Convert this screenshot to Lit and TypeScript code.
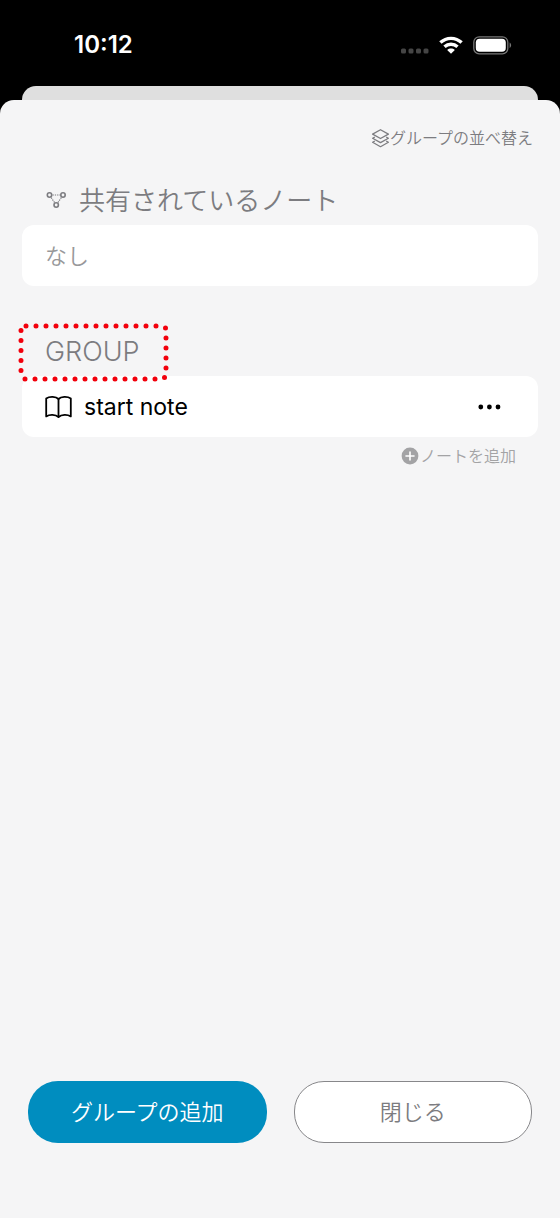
import { LitElement, html, css } from "lit";
import { customElement } from "lit/decorators.js";

@customElement("status-bar")
class StatusBar extends LitElement {
  static styles = css`
    :host {
      display: flex;
      justify-content: space-between;
      align-items: center;
      height: 86px;
      padding: 4px 48px 0 74px;
      box-sizing: border-box;
      color: #fff;
    }
    .time {
      font: 600 24px/28px Inter, "Liberation Sans", sans-serif;
    }
    .indicators {
      display: flex;
      align-items: center;
      gap: 10px;
    }
    svg {
      display: block;
    }
  `;
  render() {
    return html`
      <time class="time">10:12</time>
      <div class="indicators">
        <svg width="28" height="18" viewBox="0 0 28 18" fill="#454545">
          <rect x="0" y="12.4" width="5" height="5" rx="1.5" />
          <rect x="7.5" y="12.4" width="5" height="5" rx="1.5" />
          <rect x="15" y="12.4" width="5" height="5" rx="1.5" />
          <rect x="22.5" y="12.4" width="5" height="5" rx="1.5" />
        </svg>
        <svg width="24" height="18" viewBox="0 0 24 18" fill="none" stroke="#fff" stroke-width="3.4">
          <path d="M1.4 6.6 C7.4 .9 16.6 .9 22.6 6.6" />
          <path d="M5.5 10.8 C9.2 7.4 14.8 7.4 18.5 10.8" />
          <path d="M12 17.8 L8.2 14 C10.4 12.1 13.6 12.1 15.8 14 Z" fill="#fff" stroke="none" />
        </svg>
        <svg width="39" height="19" viewBox="0 0 39 19">
          <rect x=".8" y=".8" width="34" height="17" rx="5.4" fill="none" stroke="#777" stroke-width="1.3" />
          <rect x="2.8" y="2.8" width="30" height="13" rx="3.8" fill="#fff" />
          <path d="M36.6 6.6 C38.6 7.6 38.6 11 36.6 12 Z" fill="#777" />
        </svg>
      </div>
    `;
  }
}

@customElement("app-root")
class AppRoot extends LitElement {
  static styles = css`
    :host {
      display: flex;
      flex-direction: column;
      min-height: 100vh;
      background: #000;
      font-family: Inter, "Noto Sans CJK JP", sans-serif;
      font-weight: 350;
      color: #7c7c80;
    }
    svg {
      display: block;
      flex: none;
    }
    button {
      font: inherit;
      color: inherit;
      background: none;
      border: 0;
      padding: 0;
      margin: 0;
      cursor: pointer;
    }
    .behind {
      height: 14px;
      margin: 0 22px;
      border-radius: 14px 14px 0 0;
      background: #dfdfdf;
    }
    .sheet {
      flex: 1;
      display: flex;
      flex-direction: column;
      border-radius: 14px 14px 0 0;
      background: #f5f5f6;
      padding: 26px 22px 75px;
    }
    .tool {
      display: flex;
      align-items: center;
      font-size: 16px;
      line-height: 24px;
    }
    .sort {
      align-self: flex-end;
      margin-right: 5px;
    }
    .add {
      align-self: flex-end;
      margin: 7px 22px 0 0;
      gap: 1px;
      color: #a3a3a5;
    }
    .heading {
      display: flex;
      align-items: center;
      gap: 12px;
      margin: 0;
      padding: 0 23px;
      font-size: 26px;
      line-height: 38px;
      font-weight: 350;
    }
    .shared {
      margin: 32px 0 5px;
    }
    .group {
      position: relative;
      margin: 47px 0 5px;
      align-self: flex-start;
      font-size: 27px;
    }
    .marker {
      position: absolute;
      left: -4px;
      top: -11px;
      overflow: visible;
    }
    .card {
      display: flex;
      align-items: center;
      height: 61px;
      padding: 0 23px;
      border-radius: 12px;
      background: #fff;
      font-size: 22px;
      line-height: 32px;
    }
    .empty {
      color: #98989a;
      margin: 0;
    }
    .note {
      gap: 12px;
      color: #000;
      font-size: 23px;
      font-weight: 400;
    }
    .name {
      flex: 1;
    }
    .more {
      padding: 12px;
      margin-right: 2px;
    }
    .footer {
      display: grid;
      grid-template-columns: 1fr 1fr;
      gap: 27px;
      margin-top: auto;
      padding: 0 6px;
    }
    .action {
      height: 62px;
      border-radius: 30px;
      font-size: 22px;
      line-height: 32px;
    }
    .primary {
      background: #008dbf;
      color: #fff;
    }
    .secondary {
      background: #fff;
      border: 1px solid #87878a;
    }
  `;
  render() {
    return html`
      <status-bar></status-bar>
      <div class="behind"></div>
      <main class="sheet">
        <button class="tool sort">
          <svg width="19" height="20" viewBox="0 0 19 20" fill="none" stroke="currentColor" stroke-width="1.3" stroke-linejoin="round" stroke-linecap="round">
            <path d="M9.5 1.7 L17.4 6.1 L9.5 10.5 L1.6 6.1 Z" />
            <path d="M3.4 9.2 L1.6 10.2 L9.5 14.6 L17.4 10.2 L15.6 9.2" />
            <path d="M3.4 13.3 L1.6 14.3 L9.5 18.7 L17.4 14.3 L15.6 13.3" />
          </svg>
          <span>グループの並べ替え</span>
        </button>

        <h2 class="heading shared">
          <svg width="22" height="20" viewBox="0 0 22 20" fill="none" stroke="currentColor" stroke-width="1.6">
            <circle cx="4.5" cy="4" r="2.2" />
            <circle cx="18" cy="4" r="2.2" />
            <circle cx="11.2" cy="14" r="2.2" />
            <path d="M7.5 4 H15.4 M6.2 6.6 L9.6 11.6 M16.3 6.6 L12.9 11.6" stroke-width="1.2" stroke-dasharray="1.3 1" />
          </svg>
          <span>共有されているノート</span>
        </h2>
        <div class="card"><p class="empty">なし</p></div>

        <h2 class="heading group">
          <span>GROUP</span>
          <svg class="marker" width="151" height="60" viewBox="0 0 151 60" fill="none" stroke="#f2000c" stroke-width="5" stroke-linecap="round" stroke-dasharray="0 10" aria-hidden="true">
            <path d="M8 4 H139" />
            <path d="M147.5 6 L148 16 V47" />
            <path d="M146.5 55.5 H147" />
            <path d="M7 57 H138" />
            <path d="M3 8.5 V49" />
          </svg>
        </h2>
        <div class="card note">
          <svg width="27" height="24" viewBox="0 0 27 24" fill="none" stroke="#000" stroke-width="1.8" stroke-linejoin="round" stroke-linecap="round">
            <path d="M13.5 4 C11 1.5 4.5 1.2 1.2 3.6 V21.4 C4.5 19.2 10.5 19.2 13.5 22 C16.5 19.2 22.5 19.2 25.8 21.4 V3.6 C22.5 1.2 16 1.5 13.5 4 Z" />
            <path d="M13.5 4 V21.6" />
          </svg>
          <span class="name">start note</span>
          <button class="more" aria-label="メニュー">
            <svg width="23" height="6" viewBox="0 0 23 6" fill="#000">
              <circle cx="2.8" cy="3" r="2.4" />
              <circle cx="11.4" cy="3" r="2.4" />
              <circle cx="20" cy="3" r="2.4" />
            </svg>
          </button>
        </div>
        <button class="tool add">
          <svg width="18" height="18" viewBox="0 0 18 18">
            <circle cx="9" cy="9" r="8.4" fill="currentColor" />
            <path d="M9 5 V13 M5 9 H13" stroke="#fff" stroke-width="1.6" stroke-linecap="round" />
          </svg>
          <span>ノートを追加</span>
        </button>

        <div class="footer">
          <button class="action primary">グループの追加</button>
          <button class="action secondary">閉じる</button>
        </div>
      </main>
    `;
  }
}
